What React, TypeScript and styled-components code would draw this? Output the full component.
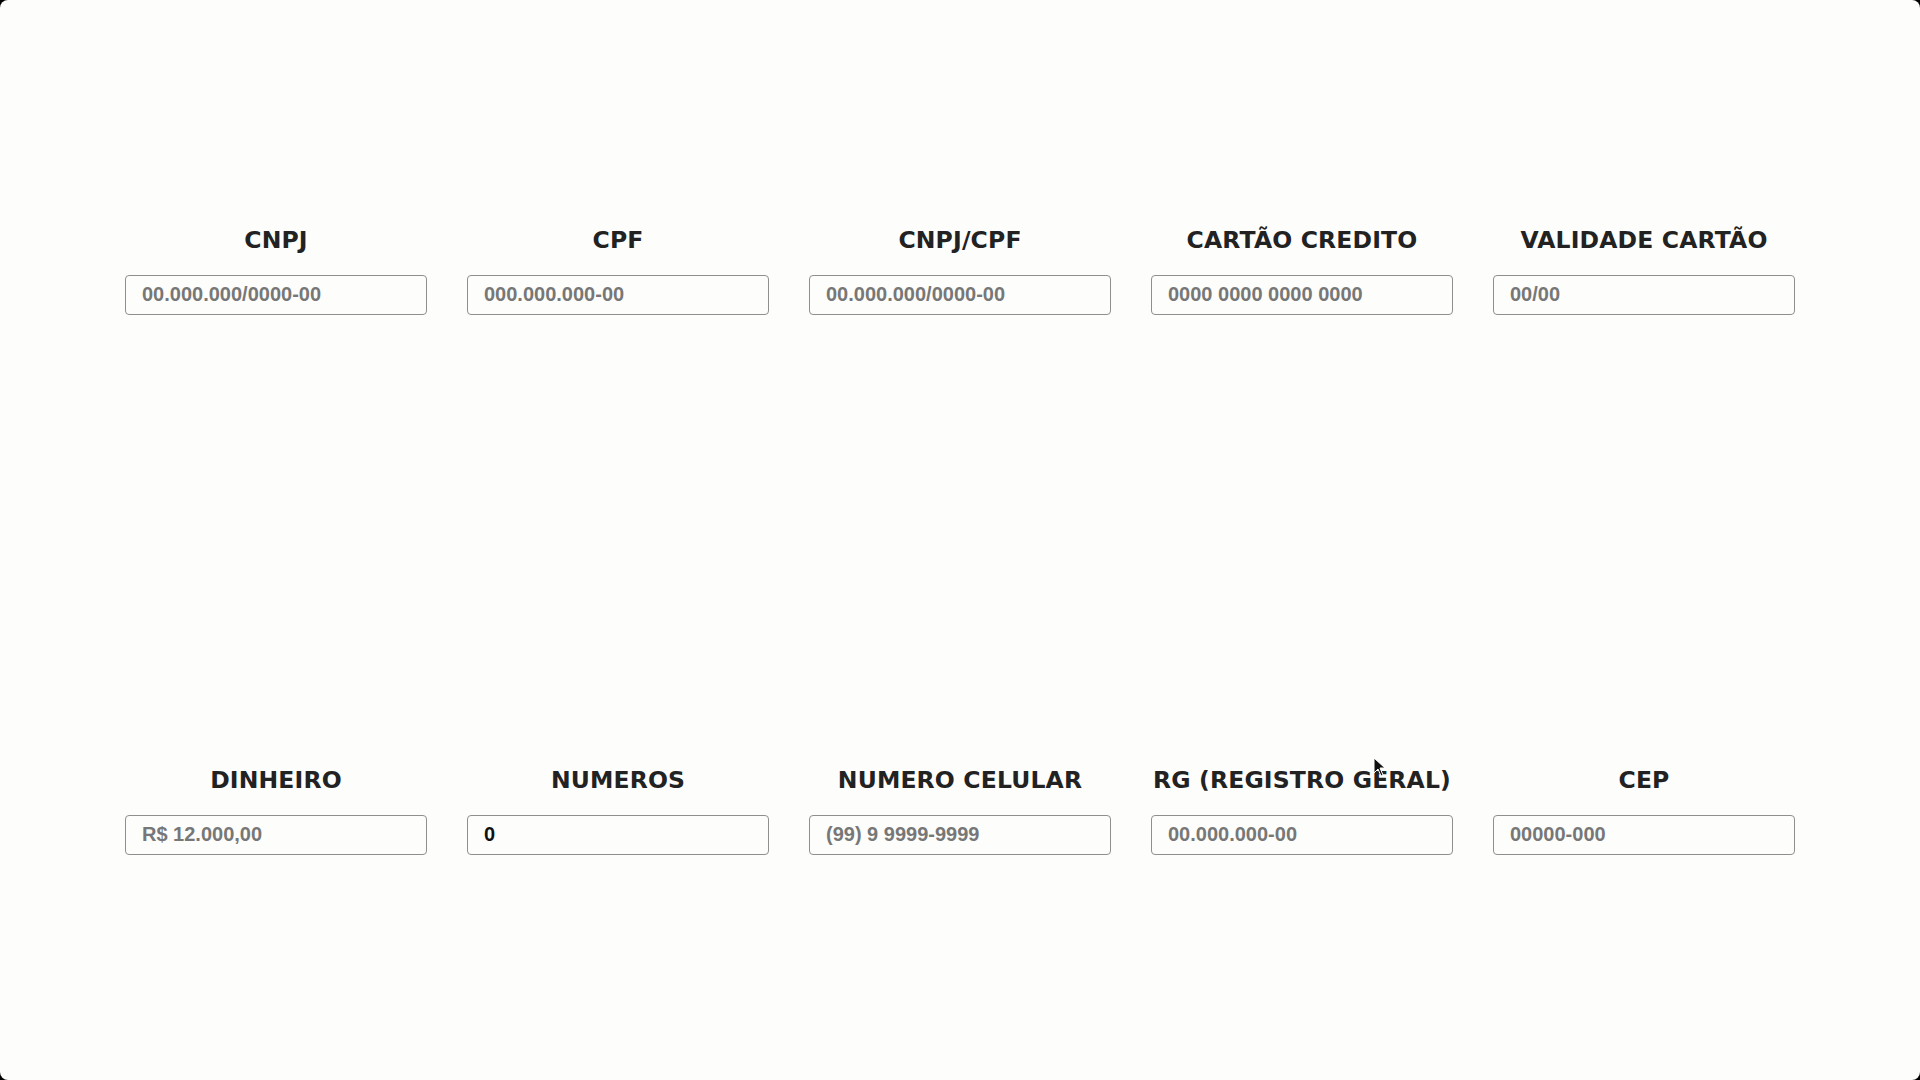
import styled, { createGlobalStyle } from "styled-components";

const GlobalStyle = createGlobalStyle`
	html, body {
		margin: 0;
		padding: 0;
		background: #000;
	}
	* {
		box-sizing: border-box;
	}
`;

const fields = [
	[
		{ label: "CNPJ",			placeholder: "00.000.000/0000-00" },
		{ label: "CPF",				placeholder: "000.000.000-00" },
		{ label: "CNPJ/CPF",		placeholder: "00.000.000/0000-00" },
		{ label: "CARTÃO CREDITO",	placeholder: "0000 0000 0000 0000" },
		{ label: "VALIDADE CARTÃO",	placeholder: "00/00" },
	],
	[
		{ label: "DINHEIRO",			placeholder: "R$ 12.000,00" },
		{ label: "NUMEROS",				placeholder: "", value: "0" },
		{ label: "NUMERO CELULAR",		placeholder: "(99) 9 9999-9999" },
		{ label: "RG (REGISTRO GERAL)",	placeholder: "00.000.000-00" },
		{ label: "CEP",					placeholder: "00000-000" },
	],
];

const Page = styled.main`
	background-color: #fdfdfb;
	border-radius: 8px;
	display: grid;
	grid-template-rows: 1fr 1fr;
	height: 100vh;
	overflow: hidden;
	position: relative;
	width: 100vw;
`;

const Row = styled.section`
	align-items: center;
	display: flex;
	gap: 40px;
	justify-content: center;
`;

const Field = styled.label`
	align-items: center;
	display: flex;
	flex-direction: column;
	gap: 21px;
	width: 302px;
`;

const Title = styled.span`
	color: #222;
	font-family: "DejaVu Sans", sans-serif;
	font-size: 23.5px;
	font-weight: bold;
	letter-spacing: 0.15px;
	white-space: nowrap;
`;

const Input = styled.input`
	background: transparent;
	border: 1px solid #8f8f8f;
	border-radius: 4px;
	color: #111;
	font-family: "Liberation Sans", Arial, sans-serif;
	font-size: 20px;
	font-weight: bold;
	height: 40px;
	outline: none;
	padding: 0 16px;
	width: 100%;

	&::placeholder {
		color: #777;
	}
`;

const Cursor = styled.svg`
	left: 1373px;
	pointer-events: none;
	position: absolute;
	top: 757px;
`;

export default function App() {
	return (
		<>
			<GlobalStyle />
			<Page>
				{ fields.map((row, i) => (
					<Row key={ i }>
						{ row.map(field => (
							<Field key={ field.label }>
								<Title>{ field.label }</Title>
								<Input
									placeholder={ field.placeholder }
									defaultValue={ field.value } />
							</Field>
						)) }
					</Row>
				)) }
				<Cursor width="14" height="20" viewBox="0 0 14 20">
					<path d="M1 1 L1 16 L5 12 L8 19 L10 18 L7 11 L12 11 Z" fill="#111" stroke="#fff" strokeWidth="1" />
				</Cursor>
			</Page>
		</>
	);
}
